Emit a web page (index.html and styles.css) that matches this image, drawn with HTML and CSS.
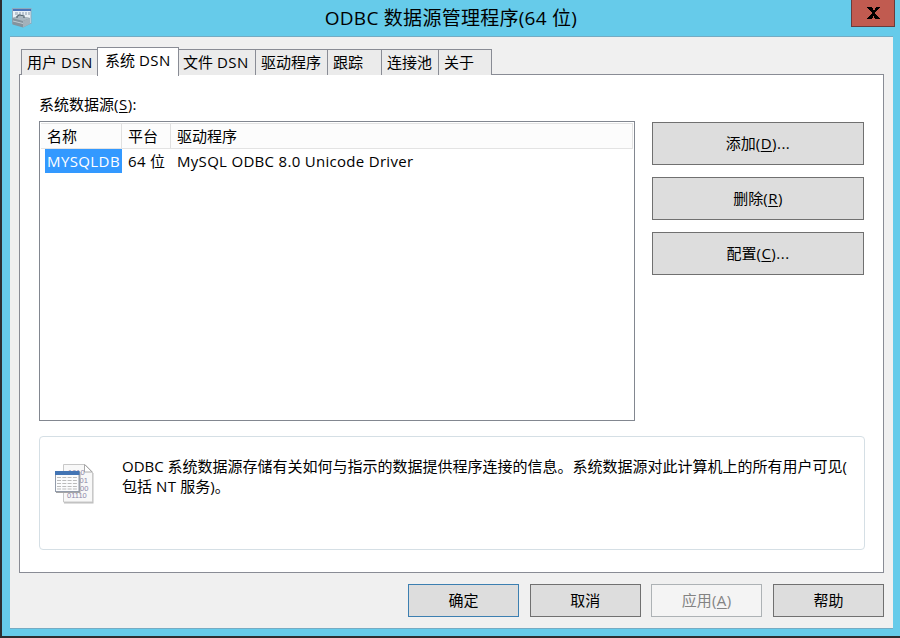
FILE: index.html
```
<!DOCTYPE html>
<html lang="zh-CN">
<head>
<meta charset="utf-8">
<title>ODBC 数据源管理程序(64 位)</title>
<link rel="stylesheet" href="styles.css">
</head>
<body>
<div class="window">
  <header class="titlebar">
    <svg class="app-icon" width="20" height="20" viewBox="0 0 20 20">
      <rect x="0.5" y="0.5" width="18.5" height="15" fill="#e9f0f5" stroke="#8fa9bb"/>
      <rect x="1" y="1" width="18" height="2" fill="#4a72b8"/>
      <path d="M3 5.500h3M7 5.500h2M10 5.500h2M13 5.500h2M16 5.500h2" stroke="#b9c5d0" stroke-width="3"/>
      <path d="M0.500 10l6-2 11.500 2v6l-7 3.500-10.500-3z" fill="#84939d"/>
      <path d="M0.500 10l6-2 11.500 2-7 3z" fill="#a9b7c0"/>
      <path d="M11 13l7-3v6l-7 3.500z" fill="#a3b1ba"/>
      <path d="M5 10V8.500l2-1.500 5 1v2" fill="none" stroke="#566772" stroke-width="1.200"/>
      <path d="M1 13l10 2.500" fill="none" stroke="#c0ccd2"/>
    </svg>
    <h1 class="title">ODBC 数据源管理程序(64 位)</h1>
    <button class="close" aria-label="关闭"><svg width="14" height="12" viewBox="0 0 14 12"><path d="M0 0h5v1h1v2h2V1h1V0h4v1h-1v1h-1v1h-1v1H9v1H8v2h1v1h1v1h1v1h1v1h1v1H8v-1H7V9H6v2H5v1H0v-1h1v-1h1V9h1V8h1V7h1V5H4V4H3V3H2V2H1V1H0z"/></svg></button>
  </header>
  <main class="client">
    <nav class="tabs">
      <span class="tab t-user">用户 <i>DSN</i></span>
      <span class="tab t-system active">系统 <i>DSN</i></span>
      <span class="tab t-file">文件 <i>DSN</i></span>
      <span class="tab t-driver">驱动程序</span>
      <span class="tab t-trace">跟踪</span>
      <span class="tab t-pool">连接池</span>
      <span class="tab t-about">关于</span>
    </nav>
    <section class="page">
      <div class="label">系统数据源<i>(<u>S</u>):</i></div>
      <div class="sources">
        <div class="list">
          <div class="row head"><span>名称</span><span>平台</span><span>驱动程序</span></div>
          <div class="row item"><span class="selected">MYSQLDB</span><span><i>64</i> 位</span><span class="driver">MySQL ODBC 8.0 Unicode Driver</span></div>
        </div>
        <div class="actions">
          <button class="btn">添加<i>(<u>D</u>)...</i></button>
          <button class="btn">删除<i>(<u>R</u>)</i></button>
          <button class="btn">配置<i>(<u>C</u>)...</i></button>
        </div>
      </div>
      <div class="info">
        <svg class="info-icon" width="40" height="42" viewBox="0 0 40 42">
          <path d="M9 2.500h22l7.500 8V40.500H9z" fill="#bdbdbd"/>
          <path d="M8.500 1.500H30l7.500 7.500v30h-29z" fill="#f8f8f8" stroke="#c8c8c8"/>
          <path d="M29.500 1.500V9h7.500z" fill="#fff" stroke="#aaa"/>
          <g class="bits"><text x="13" y="12">1010</text><text x="12.500" y="20">01101</text><text x="12.500" y="27.500">01000</text><text x="12" y="35">01110</text></g>
          <rect x="1" y="9" width="24.500" height="21" fill="#a5a5a5"/>
          <rect x="0.500" y="8.500" width="23.500" height="20" fill="#fbfcfd" stroke="#929baa"/>
          <rect x="0" y="8" width="24.500" height="4" fill="#4274b4"/>
          <path d="M2 14.500h21M2 17.500h21M2 20.500h21M2 23.500h21M2 26h21" stroke="#bbb" stroke-dasharray="4 1.300"/>
        </svg>
        <p class="desc">ODBC 系统数据源存储有关如何与指示的数据提供程序连接的信息。系统数据源对此计算机上的所有用户可见(<br>包括 <i>NT</i> 服务)。</p>
      </div>
    </section>
    <footer class="footer">
      <button class="btn default">确定</button>
      <button class="btn">取消</button>
      <button class="btn disabled">应用<i>(<u>A</u>)</i></button>
      <button class="btn">帮助</button>
    </footer>
  </main>
</div>
</body>
</html>
```
FILE: styles.css
```
* { box-sizing: border-box; }
body {
  margin: 0;
  width: 900px;
  height: 638px;
  overflow: hidden;
  background: #2d2d30;
  color: #000;
  font: 15px/20px "Open Sans", "Noto Sans CJK SC", sans-serif;
}
i { font-style: normal; letter-spacing: 0.5px; }
u { text-decoration-thickness: 1px; text-underline-offset: 2px; }
.window {
  height: 636px;
  margin-left: 2px;
  padding: 0 7px 7px 8px;
  background: #66cbea;
}
.titlebar { display: flex; height: 36px; }
.app-icon { margin: 8px 0 0 2px; }
.title {
  flex: 1;
  margin: 5px 0 0 19px;
  font-size: 19px;
  font-weight: 400;
  line-height: 26px;
  letter-spacing: 0.27px;
  text-align: center;
}
.close {
  display: flex;
  align-items: flex-start;
  justify-content: center;
  width: 44px;
  height: 27px;
  margin-right: -2px;
  padding: 7px 0 0 1px;
  border: 1px solid #693c3d;
  border-top: 0;
  background: #c15b50;
}
.client {
  height: 593px;
  padding: 10px 9px 0;
  border-top: 1px solid #74abc3;
  border-bottom: 1px solid #74abc3;
  background: #f0f0f0;
}
.tabs { display: flex; align-items: flex-end; height: 28px; padding-left: 2px; }
.tab {
  height: 26px;
  padding: 2px 0 0 5px;
  border: 1px solid #898c95;
  border-bottom: 0;
  border-left-width: 0;
  background: #ebebeb;
  white-space: nowrap;
}
.t-user { width: 76px; border-left-width: 1px; border-right-width: 0; }
.t-system { width: 82px; }
.t-file { width: 77px; padding-left: 4px; }
.t-driver { width: 72px; }
.t-trace { width: 54px; }
.t-pool { width: 57px; }
.t-about { width: 53px; }
.tab.active {
  position: relative;
  height: 29px;
  margin-bottom: -1px;
  padding: 2px 0 0 7px;
  border-left-width: 1px;
  background: #fff;
}
.page {
  height: 499px;
  margin-top: -1px;
  padding: 19px 18px 0 19px;
  border: 1px solid #898c95;
  background: #fff;
}
.label { height: 27px; }
.sources { display: flex; gap: 17px; }
.list { width: 596px; height: 300px; padding: 1px; border: 1px solid #828790; }
.row { display: grid; grid-template-columns: 81px 49px 1fr; }
.head { height: 26px; border: solid #e3e3e3; border-width: 1px 1px 1px 0; background: #fcfcfc; line-height: 24px; }
.head span { padding-left: 6px; border-right: 1px solid #e0e0e0; }
.head span:last-child { border-right: 0; }
.item { height: 24px; line-height: 24px; white-space: nowrap; }
.item span { padding-left: 6px; }
.item .driver { padding-left: 6px; letter-spacing: 0.3px; }
.item .selected { margin-left: 4px; padding-left: 2px; background: #3399ff; color: #fff; letter-spacing: 0.4px; }
.actions { display: grid; gap: 12px; width: 212px; align-content: start; padding-top: 1px; }
.btn {
  padding: 0 0 2px;
  border: 1px solid #707070;
  background: #ddd;
  color: #000;
  font: inherit;
}
.actions .btn { height: 43px; }
.info {
  display: flex;
  height: 114px;
  margin-top: 15px;
  border: 1px solid #d5dfe5;
  border-radius: 4px;
}
.info-icon { flex: none; margin: 26px 0 0 15px; }
.bits { fill: #8b87a8; font: 7.500px "Liberation Sans", sans-serif; }
.desc { margin: 19px 0 0 27px; white-space: nowrap; }
.footer { display: flex; justify-content: space-between; padding: 11px 0 0 389px; }
.footer .btn { width: 111px; height: 33px; }
.footer .default { border-color: #3c7fb1; }
.footer .disabled { border-color: #adb2b5; background: #f4f4f4; color: #838383; }
```
